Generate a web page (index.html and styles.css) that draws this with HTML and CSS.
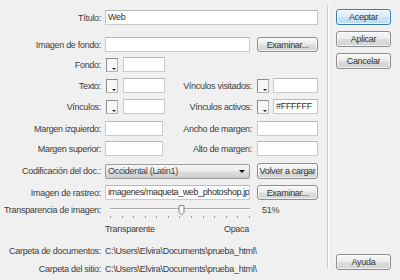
FILE: index.html
```html
<!DOCTYPE html>
<html lang="es">
<head>
<meta charset="utf-8">
<title>Propiedades de la página</title>
<link rel="stylesheet" href="styles.css">
</head>
<body>
<div class="dialog">
  <div class="form">
    <div class="row r1">
      <span class="lbl">Título:</span>
      <div class="left"><div class="field grow">Web</div></div>
    </div>
    <div class="row r2">
      <span class="lbl">Imagen de fondo:</span>
      <div class="left"><div class="field grow"></div></div>
      <div class="right"><button class="btn wide">Examinar...</button></div>
    </div>
    <div class="row r3">
      <span class="lbl">Fondo:</span>
      <div class="left"><span class="swatch first"></span><div class="field color"></div></div>
    </div>
    <div class="row r4">
      <span class="lbl">Texto:</span>
      <div class="left"><span class="swatch first"></span><div class="field color"></div><span class="mid">Vínculos visitados:</span></div>
      <div class="right"><span class="swatch"></span><div class="field grow"></div></div>
    </div>
    <div class="row r5">
      <span class="lbl">Vínculos:</span>
      <div class="left"><span class="swatch first"></span><div class="field color"></div><span class="mid">Vínculos activos:</span></div>
      <div class="right"><span class="swatch"></span><div class="field grow">#FFFFFF</div></div>
    </div>
    <div class="row r6">
      <span class="lbl">Margen izquierdo:</span>
      <div class="left"><div class="field margin"></div><span class="mid">Ancho de margen:</span></div>
      <div class="right"><div class="field grow"></div></div>
    </div>
    <div class="row r7">
      <span class="lbl">Margen superior:</span>
      <div class="left"><div class="field margin"></div><span class="mid">Alto de margen:</span></div>
      <div class="right"><div class="field grow"></div></div>
    </div>
    <div class="row r8">
      <span class="lbl">Codificación del doc.:</span>
      <div class="left"><div class="select"><span class="select-text">Occidental (Latin1)</span><span class="caret"></span></div></div>
      <div class="right"><button class="btn wide tall">Volver a cargar</button></div>
    </div>
    <div class="row r9">
      <span class="lbl">Imagen de rastreo:</span>
      <div class="left"><div class="field grow tight">imagenes/maqueta_web_photoshop.jp</div></div>
      <div class="right"><button class="btn wide">Examinar...</button></div>
    </div>
    <div class="row r10">
      <span class="lbl">Transparencia de imagen:</span>
      <div class="slider">
        <div class="track"></div>
        <div class="ticks">
          <i></i><i></i><i></i><i></i><i></i><i></i><i></i><i></i><i></i><i></i><i></i><i></i><i></i>
        </div>
        <svg class="thumb" width="7" height="11" viewBox="0 0 7 11"><path d="M1 1.5 Q1 0.5 2 0.5 H5 Q6 0.5 6 1.5 V7.5 L3.5 10 L1 7.5 Z" fill="#f6f6f6" stroke="#7d7d7d" stroke-width="1"/></svg>
      </div>
      <span class="pct">51%</span>
    </div>
    <div class="row r11">
      <span class="lbl"></span>
      <div class="left scale"><span>Transparente</span><span class="opaca">Opaca</span></div>
    </div>
    <div class="row r12">
      <span class="lbl">Carpeta de documentos:</span>
      <span class="path">C:\Users\Elvira\Documents\prueba_html\</span>
    </div>
    <div class="row r13">
      <span class="lbl">Carpeta del sitio:</span>
      <span class="path">C:\Users\Elvira\Documents\prueba_html\</span>
    </div>
  </div>
  <div class="sep"></div>
  <div class="actions">
    <button class="btn side primary">Aceptar</button>
    <button class="btn side">Aplicar</button>
    <button class="btn side">Cancelar</button>
    <button class="btn side help">Ayuda</button>
  </div>
</div>
</body>
</html>
```

FILE: styles.css
```css
* { box-sizing: border-box; }
html, body { margin: 0; padding: 0; }
body {
  width: 400px;
  height: 280px;
  overflow: hidden;
  background: #f0f0f0;
  font-family: "Liberation Sans", Arial, sans-serif;
  font-size: 9px;
  letter-spacing: -0.3px;
  line-height: 12px;
  color: #3c3c3c;
}
.dialog { display: flex; height: 280px; }
.form {
  width: 327px;
  padding: 10px 9px 0 0;
  display: flex;
  flex-direction: column;
}
.row { display: flex; align-items: center; height: 15px; }
.r2 { margin-top: 12px; }
.r3 { margin-top: 5px; }
.r4 { margin-top: 6px; }
.r5 { margin-top: 6px; }
.r6 { margin-top: 7px; }
.r7 { margin-top: 5px; }
.r8 { margin-top: 7px; height: 16px; }
.r9 { margin-top: 6px; }
.r10 { margin-top: 3px; height: 14px; }
.r11 { margin-top: 6px; height: 12px; }
.r12 { margin-top: 10px; height: 12px; }
.r13 { margin-top: 6px; height: 12px; }

.lbl {
  flex: none;
  width: 101px;
  margin-right: 4px;
  text-align: right;
  white-space: nowrap;
}
.left { flex: 1; display: flex; align-items: center; min-width: 0; height: 100%; }
.right { flex: none; width: 61px; margin-left: 7px; display: flex; align-items: center; height: 100%; }

.field {
  height: 15px;
  background: #fff;
  border: 1px solid #cacaca;
  border-top-color: #b8b8b8;
  padding: 0 2px;
  line-height: 13px;
  white-space: nowrap;
  overflow: hidden;
  color: #303030;
}
.tight { letter-spacing: -0.4px; }
.grow { flex: 1; min-width: 0; }
.color { width: 42px; margin-left: 5px; }
.margin { width: 58px; }
.mid { flex: 1; text-align: right; white-space: nowrap; margin-right: -2px; }

.swatch {
  flex: none;
  position: relative;
  width: 12px;
  height: 14px;
  border: 1px solid #b4b4b4;
  border-top-color: #8c8c8c;
  border-left-color: #8c8c8c;
  background: #f7f7f7;
  margin-right: 4px;
}
.swatch.first { margin-left: 1px; margin-right: 0; }
.swatch::after {
  content: "";
  position: absolute;
  right: 1px;
  bottom: 1px;
  border-left: 2px solid transparent;
  border-right: 2px solid transparent;
  border-top: 2px solid #222;
}

.btn {
  font: inherit;
  letter-spacing: inherit;
  color: #333;
  height: 15px;
  padding: 0;
  border: 1px solid #8d8d8d;
  border-radius: 3px;
  background: linear-gradient(#f7f7f7 0%, #ececec 48%, #dddddd 52%, #d2d2d2 100%);
  box-shadow: inset 0 0 0 1px rgba(255,255,255,0.7);
  line-height: 12px;
  text-align: center;
  white-space: nowrap;
  cursor: default;
}
.wide { width: 61px; }
.tall { height: 16px; }

.select {
  width: 145px;
  height: 15px;
  display: flex;
  align-items: center;
  border: 1px solid #9c9c9c;
  border-radius: 2px;
  background: linear-gradient(#f6f6f6 0%, #ebebeb 48%, #dcdcdc 52%, #d0d0d0 100%);
  padding: 0 4px 0 2px;
}
.select-text { flex: 1; }
.caret {
  border-left: 3px solid transparent;
  border-right: 3px solid transparent;
  border-top: 3px solid #111;
}

.slider {
  position: relative;
  width: 140px;
  margin-left: 5px;
  height: 14px;
  display: flex;
  flex-direction: column;
}
.track {
  margin-top: 5px;
  height: 2px;
  border-top: 1px solid #a8a8a8;
  border-bottom: 1px solid #ffffff;
}
.ticks {
  margin-top: 6px;
  display: flex;
  justify-content: space-between;
}
.ticks i { display: block; width: 1px; height: 2px; background: #9a9a9a; }
.thumb { position: absolute; left: 68px; top: 2px; }
.pct { margin-left: 12px; }

.scale { justify-content: space-between; flex: none; width: 145px; padding-right: 1px; }
.path { white-space: nowrap; }

.sep {
  width: 2px;
  margin: 5px 0 12px;
  border-left: 1px solid #cdcdcd;
  border-right: 1px solid #ffffff;
}
.actions {
  flex: 1;
  display: flex;
  flex-direction: column;
  gap: 6px;
  padding: 9px 0 10px 7px;
}
.side { width: 55px; height: 16px; }
.primary {
  border-color: #3d7bad;
  background: linear-gradient(#eaf5fc 0%, #dcedf8 48%, #c9e3f4 52%, #bddcf0 100%);
}
.help { margin-top: auto; }
```
